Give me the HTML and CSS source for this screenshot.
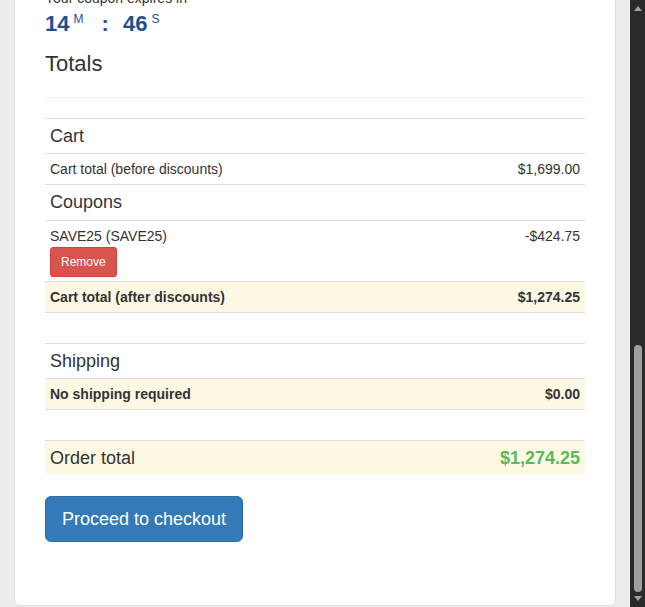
FILE: index.html
```html
<!DOCTYPE html>
<html lang="en">

<head>
    <meta charset="UTF-8">
    <meta name="viewport" content="width=device-width, initial-scale=1.0">
    <title>Cart Totals</title>

    <link rel="stylesheet" href="styles.css">
</head>

<body>

    <div class="page">
        <div class="panel">
            <p class="coupon-note">Your coupon expires in</p>
            <div class="countdown">
                <span class="count">14</span><sup class="unit">M</sup>
                <span class="colon">:</span>
                <span class="count">46</span><sup class="unit">S</sup>
            </div>

            <h3 class="totals-title">Totals</h3>
            <hr class="divider">

            <table class="totals-table">
                <tr class="group">
                    <th colspan="2">Cart</th>
                </tr>
                <tr>
                    <td>Cart total (before discounts)</td>
                    <td class="amount">$1,699.00</td>
                </tr>
                <tr class="group coupons">
                    <th colspan="2">Coupons</th>
                </tr>
                <tr class="coupon-line">
                    <td>
                        SAVE25 (SAVE25)<br>
                        <button class="btn-remove">Remove</button>
                    </td>
                    <td class="amount">-$424.75</td>
                </tr>
                <tr class="highlight">
                    <td>Cart total (after discounts)</td>
                    <td class="amount">$1,274.25</td>
                </tr>
                <tr>
                    <td colspan="2">&nbsp;</td>
                </tr>
                <tr class="group">
                    <th colspan="2">Shipping</th>
                </tr>
                <tr class="highlight">
                    <td>No shipping required</td>
                    <td class="amount">$0.00</td>
                </tr>
                <tr>
                    <td colspan="2">&nbsp;</td>
                </tr>
                <tr class="order-total">
                    <td>Order total</td>
                    <td class="amount">$1,274.25</td>
                </tr>
            </table>

            <button class="btn-checkout">Proceed to checkout</button>
        </div>
    </div>

    <div class="scrollbar">
        <div class="arrow arrow-up"></div>
        <div class="track">
            <div class="thumb"></div>
        </div>
        <div class="arrow arrow-down"></div>
    </div>

</body>

</html>
```

FILE: styles.css
```css
body {
    font-family: "Liberation Sans", Arial, sans-serif;
    font-size: 14px;
    line-height: 20px;
    color: #333;
    margin: 0;
    padding: 0;
    background-color: #ededed;
    display: flex;
    height: 607px;
    overflow: hidden;
}

.page {
    flex: 1;
    overflow: hidden;
}

.panel {
    margin: -20px 14px 0 14px;
    padding: 7px 30px 63px 30px;
    background-color: white;
    border: 1px solid #dedede;
    border-radius: 0 0 6px 6px;
}

.coupon-note {
    margin: 0;
    line-height: 20px;
}

.countdown {
    color: #1f4f8f;
    font-size: 22px;
    line-height: 30px;
    font-weight: bold;
    margin-top: 1px;
}

.countdown .unit {
    font-size: 12px;
    font-weight: normal;
    vertical-align: 8px;
    line-height: 0;
    margin-left: 4px;
}

.countdown .colon {
    margin: 0 8px 0 12px;
}

.totals-title {
    font-size: 22px;
    font-weight: normal;
    line-height: 1.1;
    margin: 13px 0 0 0;
}

.divider {
    border: 0;
    border-top: 1px solid #eee;
    margin: 21px 0 20px 0;
}

.totals-table {
    width: 100%;
    border-collapse: collapse;
    margin-bottom: 21px;
}

.totals-table th,
.totals-table td {
    padding: 5px;
    border-top: 1px solid #ddd;
    text-align: left;
    vertical-align: top;
}

.totals-table .group th {
    font-size: 18px;
    font-weight: normal;
    line-height: 24px;
}

.totals-table .coupons th {
    padding-bottom: 6px;
}

.totals-table .coupon-line td {
    padding-bottom: 4px;
}

.totals-table .amount {
    text-align: right;
}

.totals-table .highlight td {
    background-color: #fcf8e3;
    font-weight: bold;
}

.totals-table .order-total td {
    background-color: #fcf8e3;
    font-size: 18px;
    line-height: 24px;
}

.totals-table .order-total .amount {
    color: #5cb85c;
    font-weight: bold;
}

.btn-remove {
    font-family: inherit;
    background-color: #d9534f;
    border: 1px solid #d43f3a;
    color: white;
    font-size: 12px;
    line-height: 18px;
    padding: 5px 10px;
    margin-top: 1px;
    border-radius: 3px;
    cursor: pointer;
    display: block;
}

.btn-checkout {
    font-family: inherit;
    background-color: #337ab7;
    border: 1px solid #2e6da4;
    color: white;
    font-size: 18px;
    line-height: 24px;
    padding: 10px 16px;
    border-radius: 6px;
    cursor: pointer;
}

.btn-checkout:hover {
    background-color: #286090;
}

.scrollbar {
    width: 15px;
    background-color: #2a2a2a;
    display: flex;
    flex-direction: column;
    align-items: center;
}

.arrow {
    width: 0;
    height: 0;
    border-left: 4px solid transparent;
    border-right: 4px solid transparent;
}

.arrow-up {
    border-bottom: 5px solid #a3a3a3;
    margin: 6px 0 4px 0;
}

.arrow-down {
    border-top: 5px solid #a3a3a3;
    margin: 4px 0 6px 0;
}

.track {
    flex: 1;
    width: 100%;
    display: flex;
    flex-direction: column;
    justify-content: flex-end;
    align-items: center;
}

.thumb {
    width: 8px;
    height: 247px;
    background-color: #9f9f9f;
    border-radius: 4px;
}
```
